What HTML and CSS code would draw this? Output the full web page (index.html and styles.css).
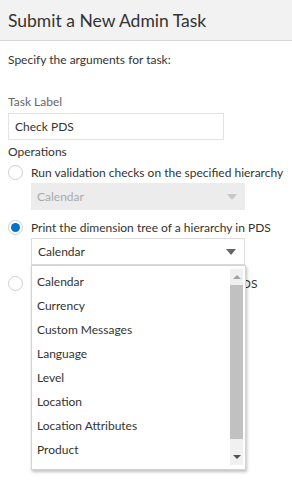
FILE: index.html
```html
<!DOCTYPE html>
<html lang="en">
<head>
    <meta charset="UTF-8">
    <meta name="viewport" content="width=device-width, initial-scale=1.0">
    <title>Submit a New Admin Task</title>
    <link rel="stylesheet" href="styles.css">
</head>
<body>
    <div class="dialog">
        <div class="dialog-header">
            <h1>Submit a New Admin Task</h1>
        </div>
        <div class="dialog-body">
            <p class="intro">Specify the arguments for task:</p>

            <label class="field-label" for="task-label">Task Label</label>
            <div class="text-input" id="task-label">Check PDS</div>

            <div class="section-label">Operations</div>

            <div class="radio-row">
                <span class="radio"></span>
                <span class="radio-text">Run validation checks on the specified hierarchy</span>
            </div>
            <div class="select disabled">
                <span>Calendar</span>
                <span class="arrow"></span>
            </div>

            <div class="radio-row">
                <span class="radio checked"></span>
                <span class="radio-text">Print the dimension tree of a hierarchy in PDS</span>
            </div>
            <div class="select-wrap">
                <div class="select open">
                    <span>Calendar</span>
                    <span class="arrow"></span>
                </div>
                <div class="dropdown">
                    <ul class="options">
                        <li>Calendar</li>
                        <li>Currency</li>
                        <li>Custom Messages</li>
                        <li>Language</li>
                        <li>Level</li>
                        <li>Location</li>
                        <li>Location Attributes</li>
                        <li>Product</li>
                    </ul>
                    <div class="scrollbar">
                        <span class="scroll-up"></span>
                        <span class="thumb"></span>
                        <span class="scroll-down"></span>
                    </div>
                </div>
            </div>

            <div class="radio-row">
                <span class="radio"></span>
                <span class="radio-text">Print the dimension tree of all levels in PDS</span>
            </div>
        </div>
    </div>
</body>
</html>
```

FILE: styles.css
```css
body {
    margin: 0;
    min-height: 100vh;
    font-family: Lato, "Open Sans", sans-serif;
    font-size: 12px;
    color: #333;
    background: #fff;
}
.dialog {
    min-height: 483px;
}
.dialog-header {
    height: 40px;
    background: #f2f2f2;
    border-bottom: 1px solid #d6d6d6;
    display: flex;
    align-items: center;
    padding: 0 8px;
}
.dialog-header h1 {
    margin: 0;
    font-size: 17.5px;
    font-weight: normal;
    color: #333;
}
.dialog-body {
    padding: 10px 8px;
}
.intro {
    margin: 0 0 24px;
    line-height: 18px;
}
.field-label {
    display: block;
    color: #666;
    line-height: 18px;
}
.text-input {
    width: 202px;
    height: 25px;
    line-height: 25px;
    border: 1px solid #e3e3e3;
    padding: 0 6px;
    margin-top: 2px;
}
.section-label {
    margin-top: 3px;
    line-height: 18px;
}
.radio-row {
    display: flex;
    align-items: center;
    gap: 8px;
    height: 22px;
    white-space: nowrap;
}
.radio {
    flex: none;
    width: 15px;
    height: 15px;
    border: 1px solid #cfcfcf;
    border-radius: 50%;
    background: #fff;
    box-sizing: border-box;
    display: flex;
    align-items: center;
    justify-content: center;
}
.radio.checked::after {
    content: "";
    width: 9px;
    height: 9px;
    border-radius: 50%;
    background: #0572ce;
}
.select {
    margin-left: 23px;
    width: 214px;
    height: 27px;
    box-sizing: border-box;
    display: flex;
    align-items: center;
    justify-content: space-between;
    padding: 0 6px;
}
.select.disabled {
    background: #ececec;
    color: #aaa;
    margin-bottom: 6px;
}
.select.open {
    border: 1px solid #dcdcdc;
    background: #fff;
}
.arrow {
    width: 0;
    height: 0;
    border-left: 5px solid transparent;
    border-right: 5px solid transparent;
    border-top: 6px solid #666;
    margin-right: 2px;
}
.select.disabled .arrow {
    border-top-color: #c8c8c8;
}
.select-wrap {
    position: relative;
    margin-bottom: 7px;
}
.dropdown {
    position: absolute;
    left: 23px;
    top: 27px;
    width: 215px;
    height: 205px;
    box-sizing: border-box;
    background: #fff;
    border: 1px solid #d4d4d4;
    box-shadow: 1px 2px 3px rgba(0, 0, 0, 0.25);
    display: flex;
    z-index: 2;
}
.options {
    list-style: none;
    margin: 0;
    padding: 4px 0 0 5px;
    flex: 1;
}
.options li {
    height: 24px;
    line-height: 24px;
}
.scrollbar {
    width: 13px;
    margin: 3px 2px 4px 0;
    background: #f0f0f0;
    display: flex;
    flex-direction: column;
    align-items: center;
}
.scroll-up,
.scroll-down {
    width: 0;
    height: 0;
    margin: 6px 0;
    border-left: 4px solid transparent;
    border-right: 4px solid transparent;
}
.scroll-up {
    border-bottom: 4px solid #a3a3a3;
}
.scroll-down {
    border-top: 4px solid #505050;
}
.thumb {
    width: 13px;
    flex: 1;
    background: #c1c1c1;
    margin-bottom: 10px;
}
```
